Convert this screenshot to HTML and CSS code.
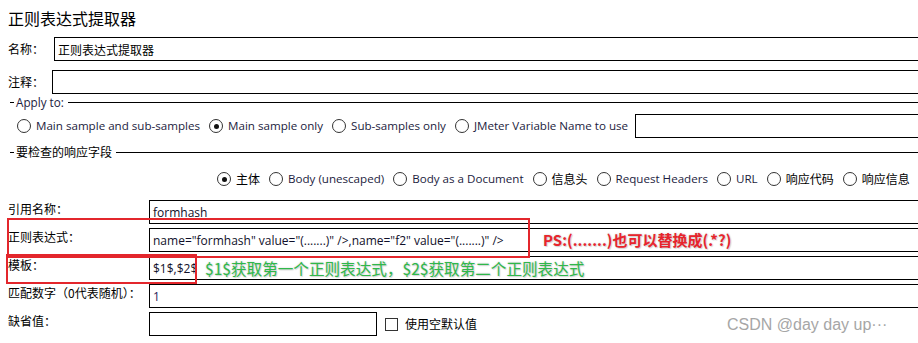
FILE: index.html
```html
<!DOCTYPE html>
<html>
<head>
<meta charset="utf-8">
<link rel="stylesheet" href="styles.css">
</head>
<body>
<div class="page">
  <div class="title">正则表达式提取器</div>

  <div class="top-row name-row">
    <span class="top-lbl">名称：</span>
    <div class="box">正则表达式提取器</div>
  </div>
  <div class="top-row comment-row">
    <span class="top-lbl">注释：</span>
    <div class="box"></div>
  </div>

  <div class="legend legend-apply"><span class="dash"></span><span class="legend-text latin">Apply to:</span><span class="rule"></span></div>
  <div class="radio-row apply-row">
    <label class="opt"><span class="radio"></span><span class="latin">Main sample and sub-samples</span></label>
    <label class="opt"><span class="radio on"></span><span class="latin">Main sample only</span></label>
    <label class="opt"><span class="radio"></span><span class="latin">Sub-samples only</span></label>
    <label class="opt"><span class="radio"></span><span class="latin">JMeter Variable Name to use</span></label>
    <div class="box var-box"></div>
  </div>

  <div class="legend legend-field"><span class="dash"></span><span class="legend-text">要检查的响应字段</span><span class="rule"></span></div>
  <div class="radio-row field-row">
    <label class="opt"><span class="radio on"></span><span>主体</span></label>
    <label class="opt"><span class="radio"></span><span class="latin">Body (unescaped)</span></label>
    <label class="opt"><span class="radio"></span><span class="latin">Body as a Document</span></label>
    <label class="opt"><span class="radio"></span><span>信息头</span></label>
    <label class="opt"><span class="radio"></span><span class="latin">Request Headers</span></label>
    <label class="opt"><span class="radio"></span><span class="latin">URL</span></label>
    <label class="opt"><span class="radio"></span><span>响应代码</span></label>
    <label class="opt"><span class="radio"></span><span>响应信息</span></label>
  </div>

  <div class="lower">
    <div class="low-row">
      <span class="low-lbl">引用名称：</span>
      <div class="box val latin">formhash</div>
    </div>
    <div class="low-row">
      <span class="low-lbl">正则表达式：</span>
      <div class="box val latin">name="formhash" value="(.......)" /&gt;,name="f2" value="(.......)" /&gt;</div>
    </div>
    <div class="low-row">
      <span class="low-lbl">模板：</span>
      <div class="box val latin">$1$,$2$</div>
    </div>
    <div class="low-row">
      <span class="low-lbl">匹配数字（0代表随机）：</span>
      <div class="box val latin num">1</div>
    </div>
    <div class="low-row">
      <span class="low-lbl">缺省值：</span>
      <div class="box short"></div>
      <label class="check-opt"><span class="checkbox"></span><span>使用空默认值</span></label>
    </div>
  </div>
</div>

<div class="mark mark-regex"></div>
<div class="mark mark-tpl"></div>
<div class="note note-red">PS:(.......)也可以替换成(.*?)</div>
<div class="note note-green">$1$获取第一个正则表达式，$2$获取第二个正则表达式</div>
<div class="watermark">CSDN @day day up···</div>
</body>
</html>
```

FILE: styles.css
```css
* { box-sizing: border-box; }
html, body {
  margin: 0;
  padding: 0;
  background: #fff;
}
body {
  width: 918px;
  height: 343px;
  overflow: hidden;
  position: relative;
  font-family: "Noto Sans CJK SC", sans-serif;
  color: #000;
  font-size: 12px;
}
.latin {
  font-family: "Open Sans", "Noto Sans CJK SC", sans-serif;
}
.page {
  padding-top: 8px;
}
.title {
  margin-left: 8px;
  font-size: 16px;
  line-height: 20px;
  height: 20px;
}
.box {
  border: 1px solid #000;
  height: 24px;
  background: #fff;
  display: flex;
  align-items: center;
  padding-left: 3px;
  white-space: nowrap;
  font-size: 12px;
}
.top-row {
  display: flex;
  align-items: center;
  height: 24px;
  margin-top: 9px;
}
.top-row .box {
  flex: 1;
  margin-right: -10px;
}
.top-lbl {
  margin-left: 8px;
  line-height: 16px;
}
.name-row .top-lbl { width: 46px; }
.comment-row .top-lbl { width: 44px; }

.legend {
  display: flex;
  align-items: center;
  height: 14px;
}
.legend-apply { margin-top: 1px; }
.legend-field { margin-top: 7px; }
.dash {
  width: 4px;
  height: 1px;
  background: #000;
  margin-left: 10px;
  margin-right: 2px;
}
.legend-text {
  line-height: 14px;
  color: #1c1c40;
}
.legend-apply .legend-text { font-size: 11.7px; }
.legend-field .legend-text { color: #000; }
.rule {
  flex: 1;
  height: 1px;
  background: #000;
  margin-left: 4px;
}

.radio-row {
  display: flex;
  align-items: center;
  height: 24px;
  gap: 9px;
  white-space: nowrap;
}
.apply-row {
  margin-top: 5px;
  padding-left: 17px;
}
.field-row {
  margin-top: 8px;
  padding-left: 217px;
}
.opt {
  display: flex;
  align-items: center;
  gap: 5px;
  line-height: 16px;
}
.opt .latin {
  color: #1c1c40;
  font-size: 11.6px;
}
.radio {
  width: 14px;
  height: 14px;
  border: 1px solid #333;
  border-radius: 50%;
  display: flex;
  align-items: center;
  justify-content: center;
  flex: none;
}
.radio.on::after {
  content: "";
  width: 5px;
  height: 5px;
  border-radius: 50%;
  background: #111;
}
.var-box {
  flex: 1;
  margin-left: -2px;
  margin-right: -10px;
}

.lower {
  margin-top: 9px;
  display: flex;
  flex-direction: column;
  gap: 4px;
}
.low-row {
  display: flex;
  align-items: flex-start;
  height: 24px;
}
.low-lbl {
  margin-left: 8px;
  width: 141px;
  font-size: 12px;
  line-height: 17px;
  flex: none;
}
.low-row .box {
  flex: 1;
  margin-right: -10px;
}
.low-row .box.short {
  flex: none;
  width: 228px;
  margin-right: 0;
}
.val {
  color: #10102a;
  padding-left: 3px;
}
.num { color: #2a1a5a; }

.check-opt {
  display: flex;
  align-items: center;
  gap: 7px;
  margin-left: 8px;
  height: 24px;
  line-height: 16px;
}
.checkbox {
  width: 13px;
  height: 13px;
  border: 1px solid #333;
  flex: none;
}

.mark {
  position: absolute;
  border: 2px solid #e3262c;
}
.mark-regex {
  left: 7px;
  top: 218px;
  width: 523px;
  height: 40px;
}
.mark-tpl {
  left: 6px;
  top: 254px;
  width: 191px;
  height: 30px;
}
.note {
  position: absolute;
  white-space: nowrap;
  line-height: 20px;
  text-shadow: 0 0 2px #c8c8c8, 1px 1px 1px #d8d8d8;
}
.note-red {
  left: 543px;
  top: 230px;
  font-size: 15px;
  color: #e8242c;
  font-weight: bold;
}
.note-green {
  left: 205px;
  top: 258px;
  font-size: 15.6px;
  color: #2fb84a;
}
.watermark {
  position: absolute;
  left: 727px;
  top: 315px;
  font-family: "Liberation Sans", Arial, sans-serif;
  font-size: 16px;
  line-height: 20px;
  color: #a6a6a6;
  white-space: nowrap;
}
```
